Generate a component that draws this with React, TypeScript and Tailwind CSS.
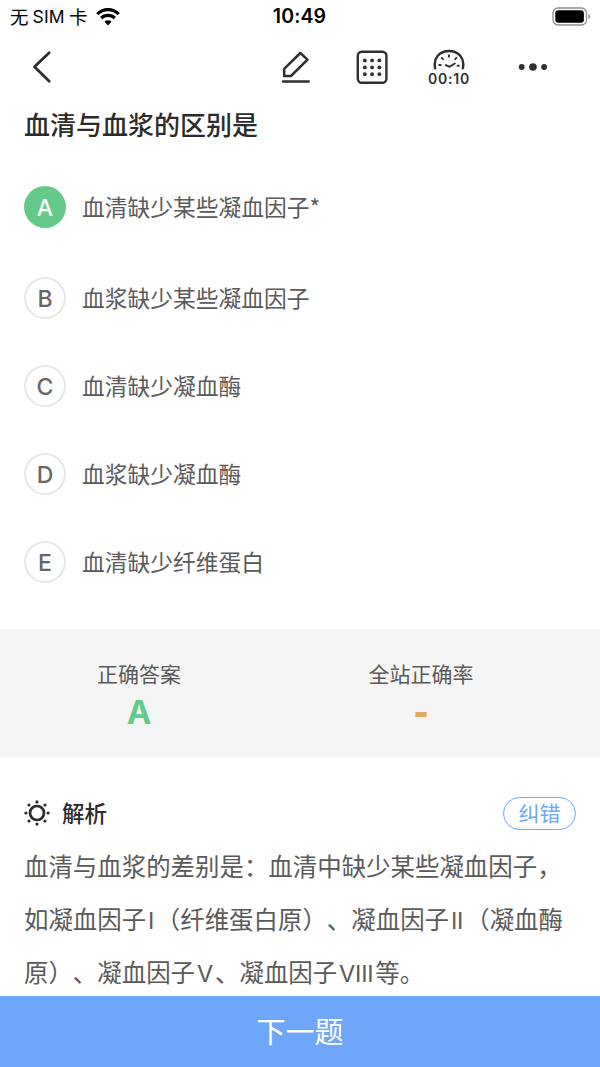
interface Option {
  label: string;
  text: string;
}

const options: Option[] = [
  { label: 'A', text: '血清缺少某些凝血因子*' },
  { label: 'B', text: '血浆缺少某些凝血因子' },
  { label: 'C', text: '血清缺少凝血酶' },
  { label: 'D', text: '血浆缺少凝血酶' },
  { label: 'E', text: '血清缺少纤维蛋白' },
];

const CORRECT = 'A';

function StatusBar() {
  return (
    <div className="grid h-[33px] shrink-0 grid-cols-3 items-center pl-[10px] pr-[9px] text-black">
      <div className="flex items-center">
        <span className="flex items-center text-[18.5px] leading-[33px]">
          <span className="w-[22.5px]">无</span>
          <span className="w-[36.5px] font-['Inter'] text-[17.5px] tracking-[0.2px]">SIM</span>
          <span>卡</span>
        </span>
        <svg className="ml-[8px]" width="24" height="18" viewBox="0 0 24 18" fill="none" stroke="currentColor">
          <path d="M1.2 6.1a15.3 15.3 0 0 1 21.6 0" strokeWidth="3.2" />
          <path d="M5.2 10.2a9.6 9.6 0 0 1 13.6 0" strokeWidth="3.1" />
          <path d="M12 17.4l-3.5-3.6a5 5 0 0 1 7 0z" fill="currentColor" stroke="none" />
        </svg>
      </div>
      <div className="-ml-0.5 text-center font-['Inter'] text-[19.5px] font-semibold leading-[33px] tracking-[0.1px]">
        10:49
      </div>
      <div className="flex justify-end pb-px">
        <svg width="39" height="19" viewBox="0 0 39 19" fill="none">
          <rect x="1" y="1" width="33.5" height="17" rx="5" stroke="#8e8e8e" strokeWidth="1.3" />
          <rect x="3.3" y="3.3" width="28.6" height="12.4" rx="3" fill="#000" />
          <path d="M36.3 6.9v5.2c1.6-.6 2-1.6 2-2.6s-.4-2-2-2.6z" fill="#999" />
        </svg>
      </div>
    </div>
  );
}

function NavBar() {
  return (
    <div className="flex h-[68px] shrink-0 items-center pl-[31px] text-[#2f2f2f]">
      <svg width="22" height="34" viewBox="0 0 22 34" fill="none" stroke="currentColor" strokeWidth="2.8" strokeLinecap="round" strokeLinejoin="round">
        <path d="M18.2 2.7L3.5 16.8l14.7 14.4" />
      </svg>
      <svg className="ml-[227px]" width="32" height="34" viewBox="0 0 32 34" fill="none" stroke="currentColor" strokeWidth="2.5" strokeLinejoin="round">
        <path d="M4.2 18.8L20.3 3l7.2 6.6L11 26H4.2z" />
        <path d="M3 31.6h25.7" strokeLinecap="round" />
      </svg>
      <svg className="ml-[43px]" width="34" height="34" viewBox="0 0 34 34" fill="none">
        <rect x="2.8" y="1.7" width="28.6" height="31" rx="4" stroke="currentColor" strokeWidth="2.4" />
        {[9.8, 17.1, 24.4].map((x) =>
          [10.4, 17.4, 24.2].map((y) => <circle key={`${x}-${y}`} cx={x} cy={y} r="1.9" fill="currentColor" />)
        )}
      </svg>
      <div className="ml-[35px] flex w-[50px] flex-col items-center pt-px">
        <svg width="32" height="21" viewBox="0 0 32 21" fill="none" stroke="currentColor" strokeLinecap="round">
          <path d="M2.2 19.3C-.2 9.8 6.3 2 16 2s16.2 7.8 13.8 17.3" strokeWidth="2.4" />
          <path d="M16 6.2v1.6M8.9 9l1 1.2M23.4 8.7l-1.2 1.6M6.2 16h1.5M24.6 16.8h1.2M12.7 16.2l3.9 1.5 5.2-3.2" strokeWidth="1.9" />
        </svg>
        <div className="font-['Inter'] text-[14px] font-semibold leading-[17px] tracking-[0.8px]">00:10</div>
      </div>
      <svg className="ml-[44px]" width="30" height="10" viewBox="0 0 30 10" fill="currentColor">
        <circle cx="3.7" cy="5" r="2.9" />
        <circle cx="14.9" cy="5" r="3.8" />
        <circle cx="26.1" cy="5" r="2.9" />
      </svg>
    </div>
  );
}

function OptionRow({ option }: { option: Option }) {
  const correct = option.label === CORRECT;
  return (
    <div className={correct ? 'mb-[3px] flex h-[42px] items-center' : 'flex h-[42px] items-center'}>
      <div
        className={
          correct
            ? "flex size-[42px] items-center justify-center rounded-full bg-[#65ca88] pt-0.5 font-['Inter'] text-[23px] font-medium text-white"
            : "flex size-[42px] items-center justify-center rounded-full border-2 border-[#e6e6e6] pt-0.5 font-['Inter'] text-[23px] font-medium text-[#666]"
        }
      >
        {option.label}
      </div>
      <div className="ml-4 text-[22.75px] leading-[42px] text-[#5a5a5a]">{option.text}</div>
    </div>
  );
}

function AnswerStats() {
  return (
    <div className="flex h-[128px] shrink-0 bg-[#f5f5f5] pt-[28px] text-[21px] text-[#5a5a5a]">
      <div className="flex w-[278px] flex-col items-center">
        <div className="leading-8">正确答案</div>
        <div className="font-['Inter'] text-[33px] font-bold leading-[46px] text-[#65ca88]">{CORRECT}</div>
      </div>
      <div className="flex w-[286px] flex-col items-center">
        <div className="leading-8">全站正确率</div>
        <div className="font-['Inter'] text-[33px] font-black leading-[46px] text-[#e5a862]">-</div>
      </div>
    </div>
  );
}

function Roman({ children, width }: { children: string; width: number }) {
  return (
    <span className="inline-block text-center font-['Inter'] text-[23.5px] leading-none tracking-[-0.2px]" style={{ width }}>
      {children}
    </span>
  );
}

function Analysis() {
  return (
    <div className="min-h-0 flex-1 px-6 pt-[39px]">
      <div className="flex h-[34px] items-center">
        <svg width="26" height="26" viewBox="0 0 26 26" fill="#2b2b2b">
          <circle cx="13" cy="13" r="7" fill="none" stroke="#2b2b2b" strokeWidth="2.7" />
          <circle cx="13" cy="1.9" r="1.6" />
          <circle cx="13" cy="24.1" r="1.6" />
          <circle cx="1.9" cy="13" r="1.6" />
          <circle cx="24.1" cy="13" r="1.6" />
          <circle cx="5" cy="5" r="1.6" />
          <circle cx="21" cy="5" r="1.6" />
          <circle cx="5" cy="21" r="1.6" />
          <circle cx="21" cy="21" r="1.6" />
        </svg>
        <div className="ml-3 pb-0.5 text-[22.5px] font-medium leading-[32px] text-[#2b2b2b]">解析</div>
        <button className="ml-auto flex h-[33px] w-[73px] items-center justify-center rounded-full border border-[#6ea6f9] pb-0.5 text-[21px] leading-none text-[#6ea6f9]">
          纠错
        </button>
      </div>
      <div className="mt-[10px] whitespace-nowrap text-[24.45px] leading-[52.8px] text-[#5a5a5a] [text-spacing-trim:space-all]">
        <p>血清与血浆的差别是：血清中缺少某些凝血因子，</p>
        <p>
          如凝血因子<Roman width={9.6}>I</Roman>（纤维蛋白原）、凝血因子<Roman width={16.2}>II</Roman>（凝血酶
        </p>
        <p>
          原）、凝血因子<Roman width={20}>V</Roman>、凝血因子<Roman width={38}>VIII</Roman>等。
        </p>
      </div>
    </div>
  );
}

export default function App() {
  return (
    <div className="flex h-[1067px] w-[600px] flex-col overflow-hidden bg-white font-['Noto_Sans_CJK_SC',sans-serif]">
      <StatusBar />
      <NavBar />
      <h1 className="h-12 shrink-0 px-6 text-[26px] font-medium leading-[46px] text-[#2b2b2b]">血清与血浆的区别是</h1>
      <div className="flex h-[480px] shrink-0 flex-col gap-[46px] px-6 pt-[37px]">
        {options.map((option) => (
          <OptionRow key={option.label} option={option} />
        ))}
      </div>
      <AnswerStats />
      <Analysis />
      <button className="h-[71px] shrink-0 bg-[#6ea6f9] pb-0.5 text-[29px] leading-[69px] text-white">下一题</button>
    </div>
  );
}
